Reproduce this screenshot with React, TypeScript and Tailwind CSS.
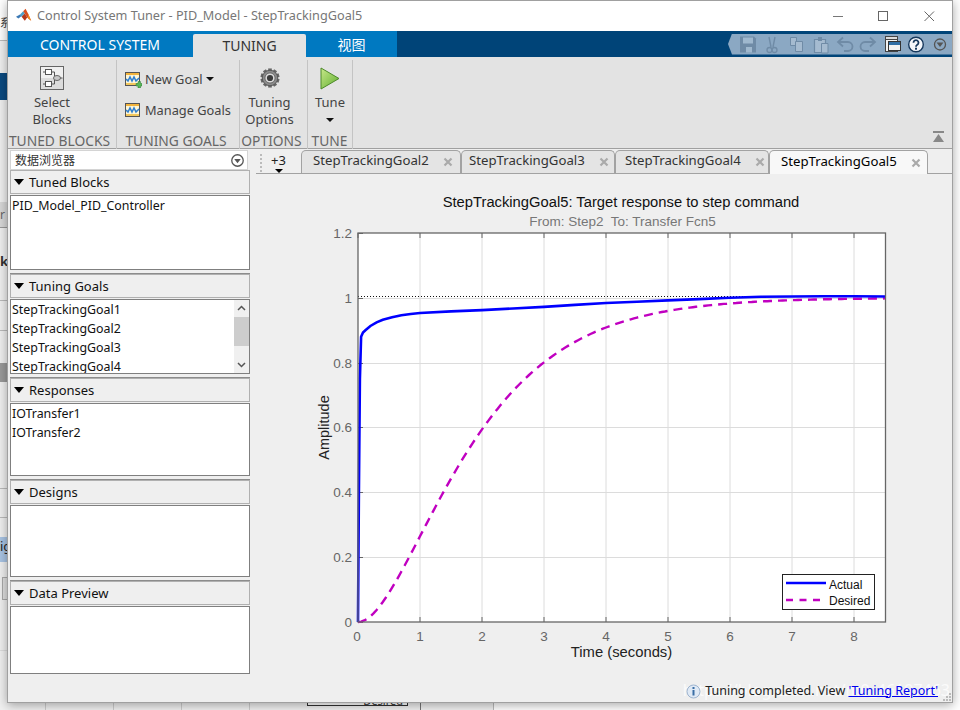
import React from "react";

const X = (t: number) => 358 + t * 62;
const Y = (v: number) => 622 - v * 324.2;

const actualPts: [number, number][] = [
  [0, 0], [0.015, 0.4], [0.03, 0.75], [0.05, 0.88], [0.08, 0.893], [0.12, 0.9], [0.2, 0.913], [0.3, 0.924], [0.4, 0.932],
  [0.55, 0.94], [0.7, 0.946], [0.85, 0.95], [1, 0.953], [1.5, 0.958], [2, 0.962], [2.5, 0.967], [3, 0.972], [3.5, 0.978],
  [4, 0.984], [4.5, 0.988], [5, 0.992], [5.5, 0.996], [6, 1.0], [6.5, 1.003], [7, 1.004], [7.5, 1.005], [8, 1.005], [8.5, 1.004],
];
const actual = actualPts.map(([t, v]) => `${X(t).toFixed(1)},${Y(v).toFixed(1)}`).join(" ");
const desired = Array.from({ length: 171 }, (_, i) => {
  const t = i * 0.05;
  return `${X(t).toFixed(1)},${Y(1 - (1 + t) * Math.exp(-t)).toFixed(1)}`;
}).join(" ");

function MatlabLogo() {
  return (
    <svg width="16" height="16" viewBox="0 0 20 18" className="shrink-0">
      <polygon points="0,10 5,7 7,9 3,12" fill="#3b79b5" />
      <polygon points="5,7 9,3 11,6 7,10" fill="#4fa0c8" />
      <polygon points="9,3 12,0 15,6 19,15 14,11 11,6" fill="#d9501e" />
      <polygon points="11,6 14,11 11,15 7,10" fill="#b5391a" />
      <polygon points="15,6 19,15 15,12" fill="#f08a24" />
    </svg>
  );
}

function WaveIcon({ plus }: { plus?: boolean }) {
  return (
    <svg width="17" height="17" viewBox="0 0 17 17" className="shrink-0">
      <rect x="0.500" y="1.500" width="14" height="13" fill="#fdf6d8" stroke="#555" />
      <rect x="1" y="2" width="13" height="2" fill="#f2b33c" />
      <rect x="1" y="12" width="13" height="2" fill="#f2c75c" />
      <polyline points="1,8 3,10 5,6 7,10 9,6 11,10 14,7" fill="none" stroke="#2f7fd0" strokeWidth="1.600" />
      {plus && <path d="M11 12.500h2v-2h2.500v2h1.500v2.500h-1.500v2H13v-2h-2z" fill="#58b858" stroke="#2c7a32" strokeWidth="0.500" />}
    </svg>
  );
}

function BlocksIcon() {
  return (
    <svg width="24" height="24" viewBox="0 0 24 24">
      <rect x="0.500" y="0.500" width="23" height="23" fill="#dcdcdc" stroke="#666" />
      <rect x="1" y="1" width="22" height="11" fill="#f0f0f0" />
      <rect x="5.500" y="3.500" width="6" height="5" fill="#fff" stroke="#555" />
      <rect x="5.500" y="15.500" width="6" height="5" fill="#fff" stroke="#555" />
      <ellipse cx="17" cy="12" rx="3.500" ry="2.500" fill="#c8c8c8" stroke="#666" />
      <path d="M3 6h2.500M11.500 6h3v4M3 18h2.500M11.500 18h3v-4M20.500 12h2" fill="none" stroke="#555" />
    </svg>
  );
}

function GearIcon() {
  const teeth = Array.from({ length: 10 }, (_, i) => i * 36);
  return (
    <svg width="20" height="20" viewBox="0 0 22 22">
      {teeth.map((a) => (
        <rect key={a} x="9" y="0.500" width="4" height="4" fill="#666" transform={`rotate(${a} 11 11)`} />
      ))}
      <circle cx="11" cy="11" r="8.500" fill="#8c8c8c" stroke="#555" />
      <circle cx="11" cy="11" r="5.600" fill="#dcdcdc" stroke="#666" />
      <circle cx="11" cy="11" r="3.400" fill="#3c3c3c" />
    </svg>
  );
}

function PlayIcon() {
  return (
    <svg width="20" height="23" viewBox="0 0 20 23">
      <defs>
        <linearGradient id="pg" x1="0" y1="0" x2="1" y2="1">
          <stop offset="0" stopColor="#c8e88a" />
          <stop offset="1" stopColor="#5fae2e" />
        </linearGradient>
      </defs>
      <polygon points="1,1 19,11.500 1,22" fill="url(#pg)" stroke="#4d8a2a" />
    </svg>
  );
}

function Caret({ w = 8, h = 4, color = "#111" }: { w?: number; h?: number; color?: string }) {
  return (
    <svg width={w} height={h} viewBox={`0 0 ${w} ${h}`} className="shrink-0">
      <polygon points={`0,0 ${w},0 ${w / 2},${h}`} fill={color} />
    </svg>
  );
}

function RoundDown({ size = 12, color = "#555" }: { size?: number; color?: string }) {
  return (
    <svg width={size} height={size} viewBox="0 0 12 12" className="shrink-0">
      <circle cx="6" cy="6" r="5.300" fill="none" stroke={color} strokeWidth="1.200" />
      <polygon points="3,4.500 9,4.500 6,8.500" fill={color} />
    </svg>
  );
}

function QuickBar() {
  const c = "#6f8ba6";
  return (
    <div className="ml-auto flex h-[21px] w-[224px] items-center bg-[#8ba8c3] [clip-path:polygon(4px_0,100%_0,100%_100%,4px_100%,0_50%)]">
      <svg width="224" height="21" viewBox="0 0 224 21">
        <path d="M12 2.500h14l2 2v14H12z" fill={c} />
        <rect x="15" y="3.500" width="10" height="6" fill="#9fb8ce" />
        <rect x="18" y="13" width="6" height="5.500" fill="#9fb8ce" />
        <path d="M41 3l2 10M47 3l-2 10" stroke={c} strokeWidth="1.400" />
        <circle cx="41.500" cy="16" r="2.500" fill="none" stroke={c} strokeWidth="1.300" />
        <circle cx="46.500" cy="16" r="2.500" fill="none" stroke={c} strokeWidth="1.300" />
        <path d="M62.500 3.500h6v8h-6z" fill="#a5bbd0" stroke={c} />
        <path d="M67.500 7.500h7v10h-7z" fill="#a5bbd0" stroke={c} />
        <path d="M86.500 5.500h11v13h-11z" fill="#a5bbd0" stroke={c} strokeWidth="1.200" />
        <path d="M90 3h4v4h-4z" fill={c} />
        <path d="M93.500 9.500h6.500v9.500h-6.500z" fill="#a5bbd0" stroke={c} />
        <path d="M116 17h4a4.500 4.500 0 0 0 0-9h-9M115 3.500l-5 4.500 5 4.500" fill="none" stroke={c} strokeWidth="1.800" />
        <path d="M141 17h-4a4.500 4.500 0 0 1 0-9h9M142 3.500l5 4.500-5 4.500" fill="none" stroke={c} strokeWidth="1.800" />
        <rect x="157.500" y="2.500" width="12" height="15" fill="#f2f2f2" stroke="#444" />
        <rect x="157.500" y="2.500" width="12" height="3" fill="#ddd" stroke="#444" />
        <rect x="160.500" y="7.500" width="12" height="9" fill="#f2f2f2" stroke="#333" />
        <rect x="161" y="8" width="11" height="3" fill="#2f6ea5" />
        <circle cx="188" cy="10.500" r="7.300" fill="#f4f6fa" stroke="#16385c" strokeWidth="1.400" />
        <path d="M185.500 8.700a2.500 2.500 0 1 1 3.800 2.100c-.9.600-1.300 1-1.300 2" fill="none" stroke="#16385c" strokeWidth="1.800" />
        <rect x="187" y="13.700" width="2" height="2" fill="#16385c" />
        <circle cx="212" cy="10.500" r="5.500" fill="none" stroke="#555" strokeWidth="1.300" />
        <polygon points="208.500,8.500 215.500,8.500 212,13" fill="#555" />
      </svg>
    </div>
  );
}

function TabClose() {
  return (
    <svg width="10" height="10" viewBox="0 0 10 10" className="shrink-0">
      <path d="M1.500 1.500l7 7M8.500 1.500l-7 7" stroke="#aaa" strokeWidth="2.200" />
    </svg>
  );
}

function DocTab({ label, active, box }: { label: string; active?: boolean; box: string }) {
  return (
    <div
      className={`${box} ${active ? "relative z-10 mb-[-1px] h-[24px] bg-[#f8f8f8] text-black" : "h-[23px] bg-[#e4e4e4] text-[#333]"} flex shrink-0 items-center justify-between rounded-t-[5px] border border-b-0 border-[#a2a2a2] text-[13.200px]`}
    >
      <span className="pb-[2px]">{label}</span>
      <TabClose />
    </div>
  );
}

function Section({ title, h, first, children }: { title: string; h: string; first?: boolean; children?: React.ReactNode }) {
  return (
    <div className={`${first ? "" : "mt-[3px] border-t border-[#8c8c8c]"} w-[240px]`}>
      <div className="flex h-[24px] items-center gap-[4px] border border-[#b0b0b0] bg-[#efefef] pl-[3px] text-[13px] text-[#111]">
        <Caret w={10} h={6} color="#000" />
        <span className="pl-[1px] pt-[1px]">{title}</span>
      </div>
      <div className={`${h} mt-[1px] overflow-hidden border border-[#7f7f7f] bg-white`}>{children}</div>
    </div>
  );
}

function Row({ children }: { children: React.ReactNode }) {
  return <div className="h-[19px] pl-[1px] text-[12.400px] leading-[19px] text-[#111]">{children}</div>;
}

function Group({ width, label, labelBox, children }: { width: string; label: string; labelBox: string; children: React.ReactNode }) {
  return (
    <div className={`${width} mt-[3px] flex h-[89px] shrink-0 flex-col border-r border-[#c4c4c4]`}>
      <div className="flex h-[73px] flex-col">{children}</div>
      <div className={`${labelBox} mt-auto whitespace-nowrap text-center text-[13.800px] leading-[16px] text-[#666]`}>{label}</div>
    </div>
  );
}

function Plot() {
  const xt = [0, 1, 2, 3, 4, 5, 6, 7, 8];
  const yt = [0, 0.2, 0.4, 0.6, 0.8, 1, 1.2];
  const ff = { fontFamily: '"Liberation Sans", Arial, sans-serif' };
  return (
    <svg width="700" height="506" viewBox="252 174 700 506" className="block shrink-0" style={ff}>
      <text x="621" y="207" textAnchor="middle" fontSize="14.750" fill="#111">
        StepTrackingGoal5: Target response to step command
      </text>
      <text x="622.500" y="226" textAnchor="middle" fontSize="13.500" fill="#777" xmlSpace="preserve">
        From: Step2  To: Transfer Fcn5
      </text>
      <rect x="358" y="233" width="527.500" height="389" fill="#fff" />
      {xt.slice(1).map((t) => (
        <line key={t} x1={X(t)} x2={X(t)} y1="233" y2="622" stroke="#dcdcdc" />
      ))}
      {yt.slice(1, -1).map((v) => (
        <line key={v} x1="358" x2="885.500" y1={Math.round(Y(v)) + 0.5} y2={Math.round(Y(v)) + 0.5} stroke="#dcdcdc" />
      ))}
      {xt.map((t) => (
        <React.Fragment key={t}>
          <line x1={X(t)} x2={X(t)} y1="233" y2="238" stroke="#666" />
          <line x1={X(t)} x2={X(t)} y1="617" y2="622" stroke="#666" />
          <text x={X(t) - (t === 0 ? 1 : 0)} y="641" textAnchor="middle" fontSize="13.500" fill="#666">
            {t}
          </text>
        </React.Fragment>
      ))}
      {yt.map((v) => (
        <React.Fragment key={v}>
          <line x1="358" x2="363" y1={Math.round(Y(v)) + 0.5} y2={Math.round(Y(v)) + 0.5} stroke="#666" />
          <text x="352" y={Y(v) + 5} textAnchor="end" fontSize="13.500" fill="#666">
            {v}
          </text>
        </React.Fragment>
      ))}
      <line x1="358" x2="885" y1="296.500" y2="296.500" stroke="#111" strokeDasharray="1 2" />
      <polyline points={desired} fill="none" stroke="#c000c0" strokeWidth="2.400" strokeDasharray="9 6" />
      <polyline points={actual} fill="none" stroke="#0000ff" strokeWidth="2.600" />
      <rect x="358" y="233" width="527.500" height="389" fill="none" stroke="#666" strokeWidth="1.300" />
      <text x="621.500" y="657" textAnchor="middle" fontSize="14.800" fill="#222">
        Time (seconds)
      </text>
      <text transform="translate(329 427.500) rotate(-90)" textAnchor="middle" fontSize="14.500" fill="#222">
        Amplitude
      </text>
      <rect x="782.500" y="574.500" width="92" height="35" fill="#fff" stroke="#222" />
      <line x1="786" x2="826" y1="583" y2="583" stroke="#0000ff" strokeWidth="2.300" />
      <line x1="786" x2="826" y1="600" y2="600" stroke="#c000c0" strokeWidth="2.300" strokeDasharray="7 6.500" />
      <text x="829" y="589" fontSize="12" fill="#111">
        Actual
      </text>
      <text x="829" y="605" fontSize="12" fill="#111">
        Desired
      </text>
    </svg>
  );
}

export default function App() {
  const ui = { fontFamily: '"Noto Sans", "Noto Sans CJK SC", sans-serif' };
  return (
    <div className="relative h-[710px] w-[960px] overflow-hidden bg-white" style={ui}>
      {/* Desktop behind the window */}
      <div className="absolute left-0 top-0 h-[710px] w-[494px] border-r border-[#bbb] bg-[#f0f0f0]" />
      <div className="absolute left-0 top-0 h-[41px] w-[8px] overflow-hidden border-b border-[#bbb] bg-white text-[11px] leading-[46px] text-[#333]">系</div>
      <div className="absolute left-0 top-[73px] h-[27px] w-[8px] bg-[#0b4a80]" />
      <div className="absolute left-0 top-[202px] h-[26px] w-[8px] border-b border-[#999] bg-[#d8d8d8] text-[12px] leading-[26px] text-[#666]">r</div>
      <div className="absolute left-0 top-[252px] text-[13px] font-bold text-[#333]">k</div>
      <div className="absolute left-0 top-[300px] h-[31px] w-[8px] border-y border-[#bbb]" />
      <div className="absolute left-0 top-[363px] h-[19px] w-[8px] bg-[#9a9a9a]" />
      <div className="absolute left-0 top-[488px] h-[30px] w-[8px] border-y border-[#bbb]" />
      <div className="absolute left-0 top-[537px] h-[25px] w-[8px] overflow-hidden bg-[#a9c4e4] text-[13px] text-[#222]">ig</div>
      <div className="absolute left-[2px] top-[577px] h-[23px] w-[6px] border border-[#aaa] bg-[#e0e0e0]" />
      <div className="absolute left-0 top-[650px] h-px w-[8px] bg-[#ddd]" />
      <div className="absolute left-[45px] top-[702px] h-[8px] w-px bg-[#ccc]" />
      <div className="absolute left-[113px] top-[702px] h-[8px] w-px bg-[#ccc]" />
      <div className="absolute left-[181px] top-[702px] h-[8px] w-px bg-[#ccc]" />
      <div className="absolute left-[249px] top-[702px] h-[8px] w-px bg-[#ccc]" />
      <div className="absolute left-[307px] top-[690px] flex h-[16px] w-[101px] justify-end border border-[#333] bg-white pr-[4px] text-[11px] leading-[20px] text-[#333]">Desired</div>
      <div className="absolute left-[420px] top-[702px] h-[8px] w-px bg-[#777]" />

      {/* Window */}
      <div className="absolute left-[7px] top-0 flex h-[703px] w-[946px] flex-col border border-[#a0a0a0] bg-[#efefef] shadow-[0_2px_10px_rgba(0,0,0,0.35)]">
        {/* Title bar */}
        <div className="flex h-[30px] shrink-0 items-center bg-white pl-[8px]">
          <MatlabLogo />
          <span className="ml-[5px] whitespace-nowrap pb-[1px] text-[12.700px] text-[#777]">Control System Tuner - PID_Model - StepTrackingGoal5</span>
          <svg width="120" height="20" viewBox="0 0 120 20" className="ml-auto mr-[8px] shrink-0">
            <line x1="9" x2="19" y1="10.500" y2="10.500" stroke="#777" />
            <rect x="54.500" y="5.500" width="9" height="9" fill="none" stroke="#666" />
            <path d="M100.500 5.500l9.500 9.500M110 5.500l-9.500 9.500" stroke="#666" fill="none" />
          </svg>
        </div>

        {/* Ribbon tabs */}
        <div className="flex h-[26px] shrink-0 items-end bg-[#004478]">
          <div className="flex h-[26px] w-[389px] shrink-0 items-end bg-[#0079c1]">
            <div className="flex h-[26px] w-[185px] items-center justify-center pt-[1px] text-[14px] text-white">
              <span className="ml-[-1px]">CONTROL SYSTEM</span>
            </div>
            <div className="flex h-[23px] w-[113px] items-center justify-center rounded-t-[2px] bg-[#e3e3e3] text-[14px] text-[#333]">TUNING</div>
            <div className="flex h-[26px] w-[91px] items-center justify-center pt-[1px] text-[14px] text-white">视图</div>
          </div>
          <div className="flex h-[26px] flex-1 items-center">
            <QuickBar />
          </div>
        </div>

        {/* Toolstrip */}
        <div className="flex h-[92px] shrink-0 border-b border-[#a0a0a0] bg-[#e3e3e3] text-[13px] leading-[17px] text-[#444]">
          <Group width="w-[109px]" label="TUNED BLOCKS" labelBox="pr-[5px]">
            <div className="flex flex-col items-center pr-[20px] pt-[6px]">
              <BlocksIcon />
              <span className="mt-[4px]">Select</span>
              <span>Blocks</span>
            </div>
          </Group>
          <Group width="w-[123px]" label="TUNING GOALS" labelBox="pr-[4px]">
            <div className="flex flex-col pl-[8px] pt-[9px]">
              <div className="flex h-[20px] items-center gap-[3px] text-[12.800px]">
                <WaveIcon plus />
                <span>New Goal</span>
                <Caret />
              </div>
              <div className="mt-[11px] flex h-[20px] items-center gap-[3px] text-[12.800px]">
                <WaveIcon />
                <span className="whitespace-nowrap">Manage Goals</span>
              </div>
            </div>
          </Group>
          <Group width="w-[68px]" label="OPTIONS" labelBox="pr-[4px]">
            <div className="flex flex-col items-center pr-[8px] pt-[8px]">
              <GearIcon />
              <span className="mt-[6px]">Tuning</span>
              <span>Options</span>
            </div>
          </Group>
          <Group width="w-[45px]" label="TUNE" labelBox="pr-[1px]">
            <div className="flex flex-col items-center pt-[7px]">
              <PlayIcon />
              <span className="mt-[4px]">Tune</span>
              <div className="mt-[7px]"><Caret /></div>
            </div>
          </Group>
          <div className="flex flex-1 items-end justify-end pb-[6px] pr-[8px]">
            <svg width="11" height="11" viewBox="0 0 11 11">
              <rect x="0" y="0" width="11" height="2" fill="#888" />
              <polygon points="0,11 11,11 5.500,3" fill="#888" />
            </svg>
          </div>
        </div>

        {/* Main */}
        <div className="flex min-h-0 flex-1">
          {/* Left panel */}
          <div className="w-[244px] shrink-0 pl-[2px] pt-[1px]">
            <div className="flex h-[20px] w-[238px] items-center justify-between border border-[#d4d4d4] bg-white pl-[4px] pr-[3px] pt-[1px] text-[12px] text-[#333]">
              <span>数据浏览器</span>
              <RoundDown size={13} />
            </div>
            <Section first title="Tuned Blocks" h="h-[75px]">
              <Row>PID_Model_PID_Controller</Row>
            </Section>
            <Section title="Tuning Goals" h="h-[75px]">
              <div className="flex h-full">
                <div className="flex-1">
                  <Row>StepTrackingGoal1</Row>
                  <Row>StepTrackingGoal2</Row>
                  <Row>StepTrackingGoal3</Row>
                  <Row>StepTrackingGoal4</Row>
                </div>
                <div className="flex w-[15px] shrink-0 flex-col items-center bg-[#f0f0f0]">
                  <svg width="15" height="17" viewBox="0 0 15 17" className="shrink-0"><path d="M4 10l3.500-3.500L11 10" fill="none" stroke="#555" strokeWidth="1.500" /></svg>
                  <div className="h-[29px] w-[15px] shrink-0 bg-[#cdcdcd]" />
                  <svg width="15" height="17" viewBox="0 0 15 17" className="mt-auto shrink-0"><path d="M4 7l3.500 3.500L11 7" fill="none" stroke="#555" strokeWidth="1.500" /></svg>
                </div>
              </div>
            </Section>
            <Section title="Responses" h="h-[73px]">
              <Row>IOTransfer1</Row>
              <Row>IOTransfer2</Row>
            </Section>
            <Section title="Designs" h="h-[72px]" />
            <Section title="Data Preview" h="h-[68px]" />
          </div>

          {/* Right pane */}
          <div className="flex min-w-0 flex-1 flex-col">
            <div className="ml-[4px] flex h-[25px] shrink-0 items-end border-b border-[#a2a2a2]">
              <div className="mb-[1px] ml-[4px] h-[18px] w-px border-l-2 border-dotted border-[#bbb]" />
              <div className="mb-0 flex h-[24px] w-[39px] shrink-0 flex-col items-center pr-[6px] text-[13px] text-[#222]">
                <span className="mt-[2px] leading-[19px]">+3</span>
                <div className="mt-[-1px] flex"><Caret w={8} h={4} color="#000" /></div>
              </div>
              <DocTab label="StepTrackingGoal2" box="w-[160px] pl-[11px] pr-[7px]" />
              <DocTab label="StepTrackingGoal3" box="w-[154px] pl-[7px] pr-[5px]" />
              <DocTab label="StepTrackingGoal4" box="w-[154px] pl-[9px] pr-[3px]" />
              <DocTab label="StepTrackingGoal5" active box="w-[159px] pl-[11px] pr-[6px]" />
            </div>
            <Plot />
            <div className="relative flex min-h-0 flex-1 items-center justify-end overflow-hidden pr-[14px] text-[12.500px] text-[#222]">
              <span className="absolute right-[2px] top-0 whitespace-nowrap text-[16px] leading-[20px] text-white opacity-75">https://blog.csdn.net/m0_46197463</span>
              <svg width="15" height="15" viewBox="0 0 15 15" className="relative mr-[4px] shrink-0">
                <circle cx="7.500" cy="7.500" r="6.500" fill="#dfe9f5" stroke="#9db4cf" />
                <rect x="6.500" y="6" width="2" height="5.500" fill="#3a6ea5" />
                <rect x="6.500" y="3" width="2" height="2" fill="#3a6ea5" />
              </svg>
              <span className="relative whitespace-nowrap">
                Tuning completed. View <span className="text-[#0000ee] underline">'Tuning Report'</span>
              </span>
              <svg width="8" height="8" viewBox="0 0 8 8" className="absolute bottom-[1px] right-[1px]">
                <path d="M6 0h2v2H6zM3 3h2v2H3zM6 3h2v2H6zM0 6h2v2H0zM3 6h2v2H3zM6 6h2v2H6z" fill="#bbb" />
              </svg>
            </div>
          </div>
        </div>
      </div>
    </div>
  );
}
